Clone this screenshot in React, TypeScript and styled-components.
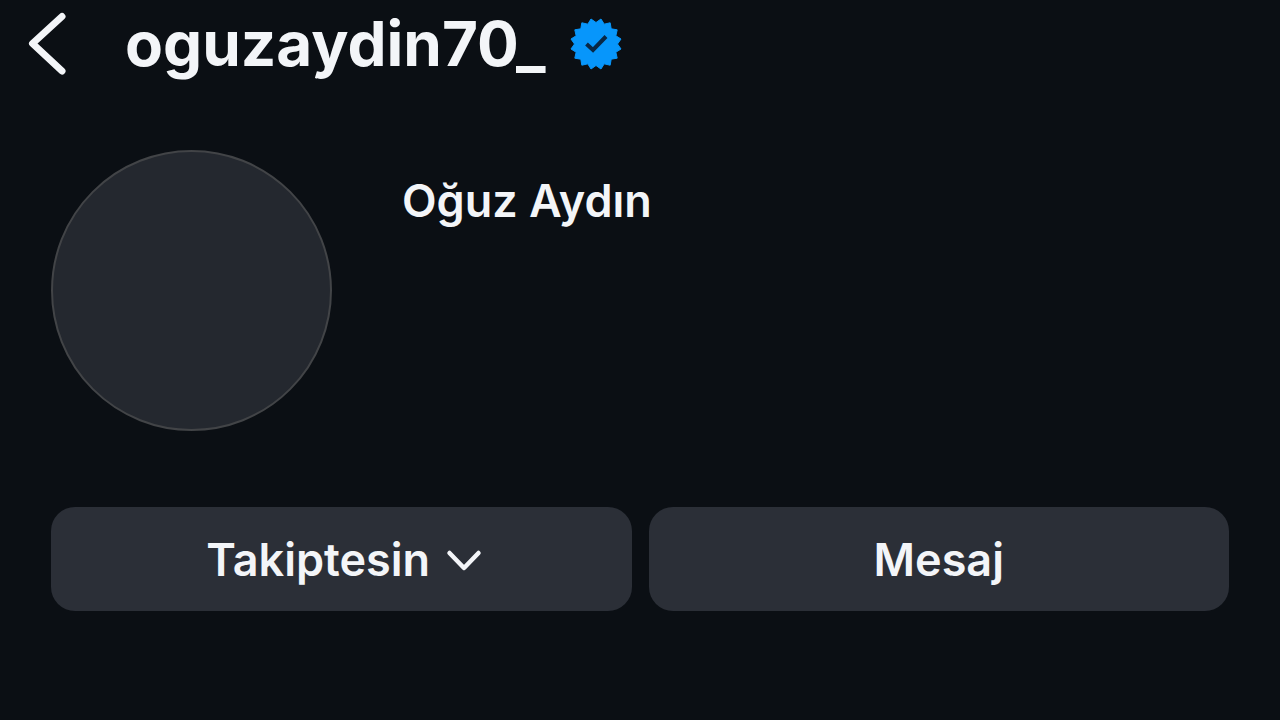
import React from "react";
import styled, { createGlobalStyle } from "styled-components";

const GlobalStyle = createGlobalStyle`
  *, *::before, *::after { box-sizing: border-box; }
  body {
    margin: 0;
    background: #0b0f14;
    color: #f3f5f8;
    font-family: Inter, "Liberation Sans", sans-serif;
  }
`;

const Page = styled.main`
  min-height: 100vh;
  background: #0b0f14;
`;

const Header = styled.header`
  display: flex;
  align-items: center;
  height: 88px;
  padding-left: 24px;
`;

const BackButton = styled.button`
  display: flex;
  margin: 0 53px 0 0;
  padding: 0;
  border: 0;
  background: none;
  color: inherit;
  cursor: pointer;
`;

const Username = styled.h1`
  margin: 0 24px 0 0;
  font-size: 62px;
  line-height: 88px;
  font-weight: 700;
`;

const Profile = styled.section`
  display: flex;
  align-items: flex-start;
  gap: 70px;
  padding: 62px 51px 0;
`;

const Avatar = styled.div`
  flex: none;
  width: 281px;
  height: 281px;
  border: 2px solid #424447;
  border-radius: 50%;
  background: #24282f;
`;

const FullName = styled.h2`
  margin: 23px 0 0;
  font-size: 45px;
  line-height: 56px;
  font-weight: 600;
`;

const Actions = styled.div`
  display: grid;
  grid-template-columns: 1fr 1fr;
  gap: 17px;
  padding: 76px 51px 0;
`;

const ActionButton = styled.button<{ $menu?: boolean }>`
  display: flex;
  align-items: center;
  justify-content: center;
  gap: 16px;
  height: 104px;
  padding: 2px 0 0 ${({ $menu }) => ($menu ? 6 : 0)}px;
  border: 0;
  border-radius: 24px;
  background: #2b2f37;
  color: inherit;
  font-family: inherit;
  font-size: 45px;
  line-height: 56px;
  font-weight: 600;
  cursor: pointer;
`;

const sealPoints = Array.from({ length: 32 }, (_, i) => {
  const radius = i % 2 === 0 ? 25.5 : 21.5;
  const angle = ((i + 1) * Math.PI) / 16;
  return `${(26 + radius * Math.cos(angle)).toFixed(2)},${(26 + radius * Math.sin(angle)).toFixed(2)}`;
}).join(" ");

const BackIcon = () => (
  <svg width="48" height="64" viewBox="0 0 48 64" fill="none" aria-hidden="true">
    <path d="M38 4.500 L8.500 31.500 L38 59" stroke="currentColor" strokeWidth="7" strokeLinecap="round" strokeLinejoin="round" />
  </svg>
);

const VerifiedBadge = () => (
  <svg width="52" height="52" viewBox="0 0 52 52" role="img" aria-label="Doğrulanmış">
    <polygon points={sealPoints} fill="#0796fb" stroke="#0796fb" strokeWidth="1" strokeLinejoin="round" />
    <path d="M16.500 26 L23 32 L36 18.500" fill="none" stroke="#082745" strokeWidth="4" />
  </svg>
);

const ChevronDown = () => (
  <svg width="36" height="24" viewBox="0 0 36 24" fill="none" aria-hidden="true">
    <path d="M3.500 5 L18 20 L32.500 5" stroke="currentColor" strokeWidth="4.500" strokeLinecap="round" strokeLinejoin="round" />
  </svg>
);

export default function App() {
  return (
    <Page>
      <GlobalStyle />
      <Header>
        <BackButton type="button" aria-label="Geri">
          <BackIcon />
        </BackButton>
        <Username>oguzaydin70_</Username>
        <VerifiedBadge />
      </Header>
      <Profile>
        <Avatar />
        <FullName>Oğuz Aydın</FullName>
      </Profile>
      <Actions>
        <ActionButton type="button" $menu>
          Takiptesin
          <ChevronDown />
        </ActionButton>
        <ActionButton type="button">Mesaj</ActionButton>
      </Actions>
    </Page>
  );
}
